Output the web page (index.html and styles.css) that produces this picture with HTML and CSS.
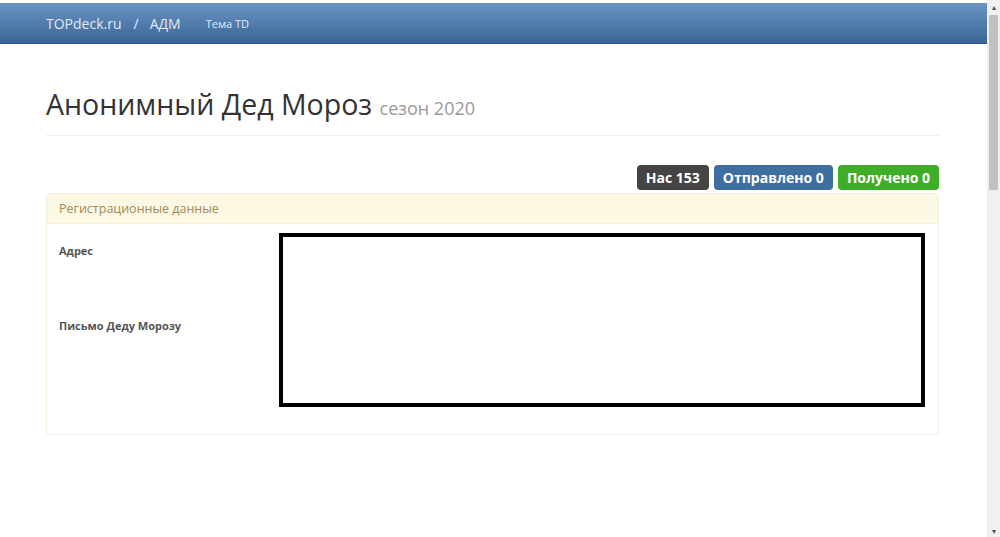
FILE: index.html
```html
<!DOCTYPE html>
<html lang="ru">
<head>
    <meta charset="UTF-8">
    <meta name="viewport" content="width=device-width, initial-scale=1.0">
    <title>Анонимный Дед Мороз</title>
    <link rel="stylesheet" href="styles.css">
</head>
<body>
    <div class="page">
        <div class="navbar">
            <div class="container nav-inner">
                <a class="brand" href="#">TOPdeck.ru</a>
                <span class="sep">/</span>
                <a class="brand" href="#">АДМ</a>
                <a class="nav-link" href="#">Тема TD</a>
            </div>
        </div>

        <div class="container">
            <div class="page-header">
                <h1>Анонимный Дед Мороз <small>сезон 2020</small></h1>
            </div>

            <div class="labels">
                <span class="label label-dark">Нас 153</span>
                <span class="label label-blue">Отправлено 0</span>
                <span class="label label-green">Получено 0</span>
            </div>

            <div class="panel">
                <div class="panel-heading">Регистрационные данные</div>
                <div class="panel-body">
                    <div class="fields">
                        <div class="field-label first">Адрес</div>
                        <div class="field-label">Письмо Деду Морозу</div>
                    </div>
                    <div class="hidden-box"></div>
                </div>
            </div>
        </div>
    </div>
    <div class="scrollbar">
        <div class="arrow">&#9652;</div>
        <div class="track"><div class="thumb"></div></div>
        <div class="arrow">&#9662;</div>
    </div>
</body>
</html>
```

FILE: styles.css
```css
html, body {
    height: 100%;
}
body {
    margin: 0;
    display: flex;
    font-family: 'Open Sans', sans-serif;
    color: #333;
    background: #fff;
    overflow: hidden;
}
.page {
    flex: 1;
    padding-top: 3px;
}
.navbar {
    height: 40px;
    background: linear-gradient(to bottom, #6a94c3, #3b6596);
    border-bottom: 1px solid #2e5786;
}
.container {
    width: 893px;
    margin: 0 48px 0 46px;
}
.nav-inner {
    display: flex;
    align-items: center;
    height: 40px;
}
.brand {
    color: #e3eaf3;
    font-size: 14px;
    text-decoration: none;
}
.sep {
    color: #e3eaf3;
    font-size: 14px;
    margin: 0 11px 0 12px;
}
.nav-link {
    color: #e3eaf3;
    font-size: 11px;
    text-decoration: none;
    margin-left: 25px;
}
.page-header {
    margin-top: 40px;
    border-bottom: 1px solid #eee;
    padding-bottom: 7px;
}
h1 {
    margin: 0;
    font-weight: 400;
    font-size: 28.5px;
    line-height: 40px;
    color: #333;
}
h1 small {
    font-size: 18px;
    color: #999;
}
.labels {
    display: flex;
    justify-content: flex-end;
    gap: 5px;
    margin-top: 29px;
}
.label {
    color: #fff;
    font-weight: 700;
    font-size: 14px;
    line-height: 25px;
    padding: 0 9px;
    border-radius: 4px;
}
.label-dark {
    background: #444;
}
.label-blue {
    background: #3f6fa0;
}
.label-green {
    background: #3fad27;
}
.panel {
    margin-top: 3px;
    border: 1px solid #f6efdf;
    border-radius: 3px;
}
.panel-heading {
    background: #fcf8e3;
    color: #a08a5a;
    font-size: 12.5px;
    line-height: 29px;
    padding: 0 12px;
    border-bottom: 1px solid #f6efdf;
}
.panel-body {
    display: flex;
    padding: 9px 12px 27px;
}
.fields {
    width: 220px;
}
.field-label {
    font-size: 11px;
    font-weight: 700;
    color: #555;
    margin-top: 60px;
}
.field-label.first {
    margin-top: 10px;
}
.hidden-box {
    width: 638px;
    height: 166px;
    border: 4px solid #000;
}
.scrollbar {
    width: 13px;
    height: 100%;
    background: #f0f0f0;
    display: flex;
    flex-direction: column;
}
.arrow {
    height: 13px;
    font-size: 8px;
    line-height: 13px;
    text-align: center;
    color: #505050;
}
.track {
    flex: 1;
    padding: 2px 2px;
}
.thumb {
    height: 175px;
    background: #c1c1c1;
}
```
